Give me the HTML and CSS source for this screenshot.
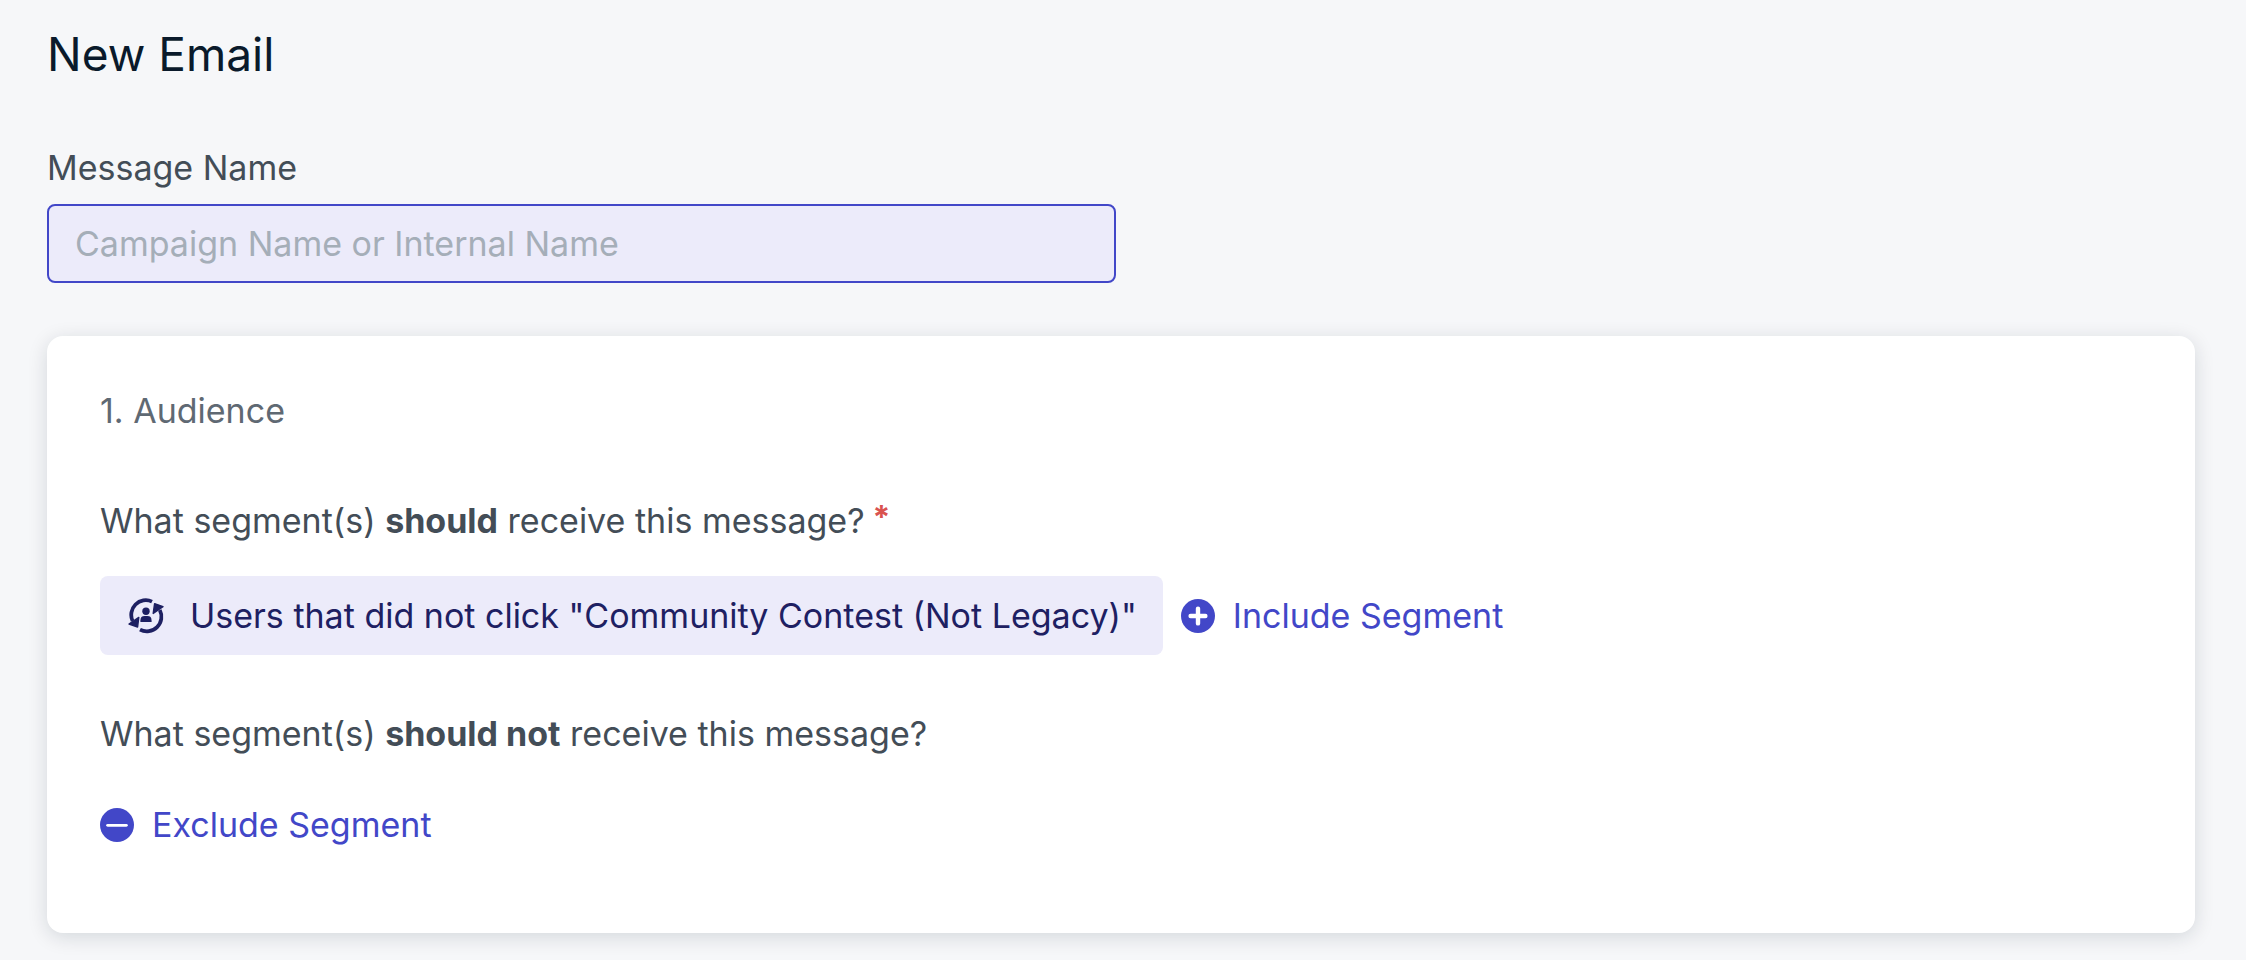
FILE: index.html
```
<!DOCTYPE html>
<html lang="en">
<head>
    <meta charset="utf-8">
    <title>New Email</title>
    <meta name="viewport" content="width=device-width, initial-scale=1.0">
    <link rel="stylesheet" href="styles.css">
</head>
<body>
<main class="page">
    <h1 class="page-title">New Email</h1>
    <form class="form">
        <div class="field">
            <label class="field-label" for="message-name">Message Name</label>
            <input class="field-input" id="message-name" type="text" placeholder="Campaign Name or Internal Name">
        </div>

        <section class="card">
            <h2 class="card-title">1. Audience</h2>

            <p class="question">What segment(s) <b>should</b> receive this message?<sup class="required">*</sup></p>
            <div class="segments">
                <button class="segment" type="button">
                    <svg class="segment-icon" viewBox="0 0 36 36" aria-hidden="true">
                        <g fill="none" stroke="currentColor" stroke-width="3.8">
                            <path d="M24 3.6A14.6 14.6 0 0 0 4.6 23"/>
                            <path d="M12 31.6A14.6 14.6 0 0 0 31.8 12"/>
                        </g>
                        <path fill="currentColor" stroke="currentColor" stroke-width="1.4" stroke-linejoin="round" d="M26.6 5.6L35 8.6L25.2 15.4ZM1 26L10.8 19.4L9.6 29Z"/>
                        <circle fill="currentColor" cx="18" cy="13.2" r="3.7"/>
                        <path fill="currentColor" d="M12.4 24V22.4Q12.4 18 16.6 18H19.4Q23.6 18 23.6 22.4V24Z"/>
                    </svg>
                    <span>Users that did not click "Community Contest (Not Legacy)"</span>
                </button>
                <button class="action" type="button">
                    <svg class="action-icon" viewBox="0 0 34 34" aria-hidden="true">
                        <circle fill="currentColor" cx="17" cy="17" r="17"/>
                        <path stroke="#fff" stroke-width="4.4" stroke-linecap="round" d="M17 9.6V24.4M9.6 17H24.4"/>
                    </svg>
                    <span>Include Segment</span>
                </button>
            </div>

            <p class="question">What segment(s) <b>should not</b> receive this message?</p>
            <div class="segments">
                <button class="action" type="button">
                    <svg class="action-icon" viewBox="0 0 34 34" aria-hidden="true">
                        <circle fill="currentColor" cx="17" cy="17" r="17"/>
                        <path stroke="#fff" stroke-width="2.8" stroke-linecap="round" d="M7.6 17.3H26.4"/>
                    </svg>
                    <span>Exclude Segment</span>
                </button>
            </div>
        </section>
    </form>
</main>
</body>
</html>
```
FILE: styles.css
```
* {
    box-sizing: border-box;
    margin: 0;
    padding: 0;
}
body {
    background: #f6f7f9;
    color: #434d57;
    font-family: Inter, "Liberation Sans", sans-serif;
    font-size: 34px;
    line-height: 44px;
}
button, input {
    font: inherit;
    border: none;
}
.page {
    padding: 24px 51px 28px 47px;
}
.page-title {
    color: #0a1a2b;
    font-size: 46px;
    font-weight: 400;
    line-height: 60px;
}
.form {
    margin-top: 62px;
}
.field {
    display: flex;
    flex-direction: column;
    gap: 14px;
    width: 50%;
    padding-right: 5px;
}
.field-input {
    width: 100%;
    height: 79px;
    padding: 0 26px;
    border: 2px solid #4247c8;
    border-radius: 8px;
    outline: none;
    background: #ecebfa;
    color: #1e2062;
}
.field-input::placeholder {
    color: #a5aeb8;
    opacity: 1;
}
.card {
    margin-top: 53px;
    padding: 53px 53px 72px;
    border-radius: 16px;
    background: #fff;
    box-shadow: 0 4px 20px rgba(10, 26, 43, 0.14);
}
.card-title {
    color: #5f6973;
    font-size: 34px;
    font-weight: 400;
    line-height: 44px;
}
.question {
    margin-top: 66px;
}
.required {
    margin-left: 8px;
    color: #d9534f;
    font-size: 32px;
    font-weight: 700;
    line-height: 0;
    vertical-align: 4px;
}
.segments {
    display: flex;
    flex-wrap: wrap;
    align-items: center;
    gap: 18px;
    margin-top: 33px;
}
.segments + .question {
    margin-top: 57px;
}
.segment {
    display: flex;
    align-items: center;
    gap: 26px;
    height: 79px;
    padding: 0 26px 0 28px;
    border-radius: 8px;
    background: #ecebfa;
    color: #1e2062;
}
.segment-icon {
    width: 36px;
    height: 36px;
}
.action {
    display: flex;
    align-items: center;
    gap: 18px;
    height: 72px;
    background: none;
    color: #4247c8;
}
.action-icon {
    width: 34px;
    height: 34px;
}
```
